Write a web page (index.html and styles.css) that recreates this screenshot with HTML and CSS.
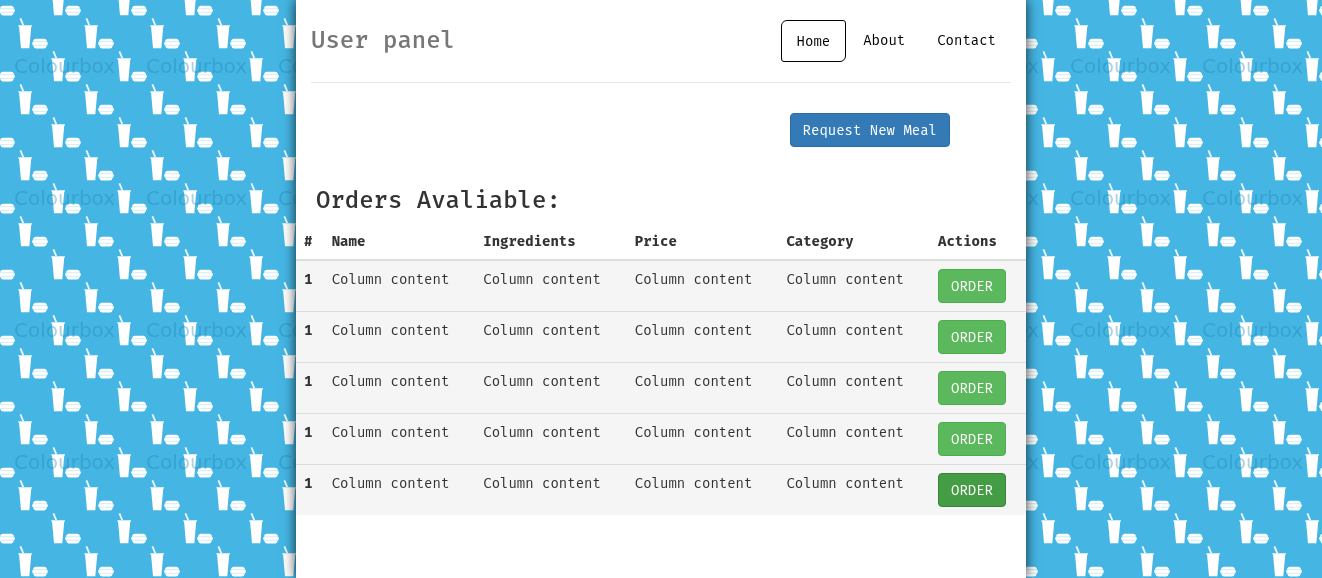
FILE: index.html
```
<!DOCTYPE html>
<html lang="en">
<head>
<meta charset="utf-8">
<meta name="viewport" content="width=device-width, initial-scale=1">
<title>User panel</title>
<link rel="stylesheet" href="styles.css">
</head>
<body>
<svg class="backdrop" aria-hidden="true">
  <defs>
    <g id="meal">
      <path d="M20.400 18.300L23.400 25.500" stroke="#f0fafd" stroke-width="1.800" fill="none"/>
      <path d="M18.300 25H32V26.600H18.300Z" fill="#cdecf8"/>
      <path d="M19 26H31.300L29.300 48.300H21Z" fill="#fff"/>
      <path d="M36 38.700H44Q46.500 38.700 47 41.500L48 43.600L47 45.500Q46 48.500 44 48.500H36Q34 48.500 33 45.500L32 43.600L33 41.500Q33.500 38.700 36 38.700Z" fill="#fff"/>
      <path d="M33 41.700H47M33 45.400H47" stroke="#c9e9f5" stroke-width=".8"/>
    </g>
    <pattern id="meals" width="66" height="66" patternUnits="userSpaceOnUse">
      <use href="#meal"/>
      <use href="#meal" x="33" y="33"/>
      <use href="#meal" x="-33" y="33"/>
      <use href="#meal" x="33" y="-33"/>
      <use href="#meal" x="-33" y="-33"/>
    </pattern>
    <pattern id="marks" width="132" height="132" patternUnits="userSpaceOnUse">
      <text class="mark" x="14" y="73">Colourbox</text>
    </pattern>
  </defs>
  <rect width="100%" height="100%" fill="#45b6e4"/>
  <rect width="100%" height="100%" fill="url(#meals)"/>
  <rect width="100%" height="100%" fill="url(#marks)"/>
</svg>
<div class="container">
  <header class="header">
    <h3 class="brand">User panel</h3>
    <nav class="nav">
      <a class="nav-link active" href="#">Home</a>
      <a class="nav-link" href="#">About</a>
      <a class="nav-link" href="#">Contact</a>
    </nav>
  </header>
  <main>
    <div class="toolbar"><button class="btn btn-primary" type="button">Request New Meal</button></div>
    <h3 class="section-title">Orders Avaliable:</h3>
    <table class="table">
      <thead>
        <tr><th>#</th><th>Name</th><th>Ingredients</th><th>Price</th><th>Category</th><th class="actions-head">Actions</th></tr>
      </thead>
      <tbody>
        <tr><th>1</th><td>Column content</td><td>Column content</td><td>Column content</td><td>Column content</td><td class="actions"><button class="btn btn-success" type="button">ORDER</button></td></tr>
        <tr><th>1</th><td>Column content</td><td>Column content</td><td>Column content</td><td>Column content</td><td class="actions"><button class="btn btn-success" type="button">ORDER</button></td></tr>
        <tr><th>1</th><td>Column content</td><td>Column content</td><td>Column content</td><td>Column content</td><td class="actions"><button class="btn btn-success" type="button">ORDER</button></td></tr>
        <tr><th>1</th><td>Column content</td><td>Column content</td><td>Column content</td><td>Column content</td><td class="actions"><button class="btn btn-success" type="button">ORDER</button></td></tr>
        <tr><th>1</th><td>Column content</td><td>Column content</td><td>Column content</td><td>Column content</td><td class="actions"><button class="btn btn-success pressed" type="button">ORDER</button></td></tr>
      </tbody>
    </table>
  </main>
</div>
</body>
</html>
```
FILE: styles.css
```
* { box-sizing: border-box; }
body {
  margin: 0;
  color: #333;
  font-family: "Fira Mono", "Fira Code", "DejaVu Sans Mono", "Liberation Mono", monospace;
  font-size: 14px;
  line-height: 20px;
}
.backdrop {
  position: fixed;
  inset: 0;
  z-index: -1;
  width: 100%;
  height: 100%;
}
.mark {
  font-family: "DejaVu Sans", sans-serif;
  font-size: 20px;
  fill: #1c80ac;
  fill-opacity: .36;
}
.container {
  max-width: 730px;
  min-height: 100vh;
  margin: 0 auto;
  background: #fff;
  box-shadow: 0 0 12px rgba(0, 0, 0, .8);
}
.header {
  display: flex;
  justify-content: space-between;
  align-items: flex-start;
  margin: 0 15px 30px;
  padding: 20px 0;
  border-bottom: 1px solid #e5e5e5;
}
.brand {
  margin: 0;
  color: #777;
  font-size: 24px;
  font-weight: 500;
  line-height: 40px;
}
.nav {
  display: flex;
  gap: 2px;
}
.nav-link {
  padding: 11px 15px 9px;
  color: #000;
  text-decoration: none;
}
.nav-link.active {
  border: 1px solid #000;
  border-radius: 6px 3px;
}
.toolbar {
  display: flex;
  justify-content: flex-end;
  padding: 0 76px 40px 0;
}
.btn {
  display: block;
  padding: 7px 12px 5px;
  border: 1px solid transparent;
  border-radius: 4px;
  color: #fff;
  font: inherit;
  cursor: pointer;
}
.btn-primary {
  background: #337ab7;
  border-color: #2e6da4;
}
.btn-success {
  background: #5cb85c;
  border-color: #4cae4c;
}
.btn-success.pressed {
  background: #449d44;
  border-color: #398439;
}
.section-title {
  margin: 0 20px 10px;
  font-size: 24px;
  font-weight: 500;
  line-height: 26px;
}
.table {
  width: 100%;
  border-collapse: collapse;
}
.table th,
.table td {
  padding: 9px 8px 7px;
  border-top: 1px solid #ddd;
  text-align: left;
  vertical-align: top;
}
.table .actions { padding: 8px; }
.table .actions-head { width: 96px; }
.table thead th {
  border-top: 0;
  border-bottom: 2px solid #ddd;
}
.table tbody tr { background: #f5f5f5; }
```
